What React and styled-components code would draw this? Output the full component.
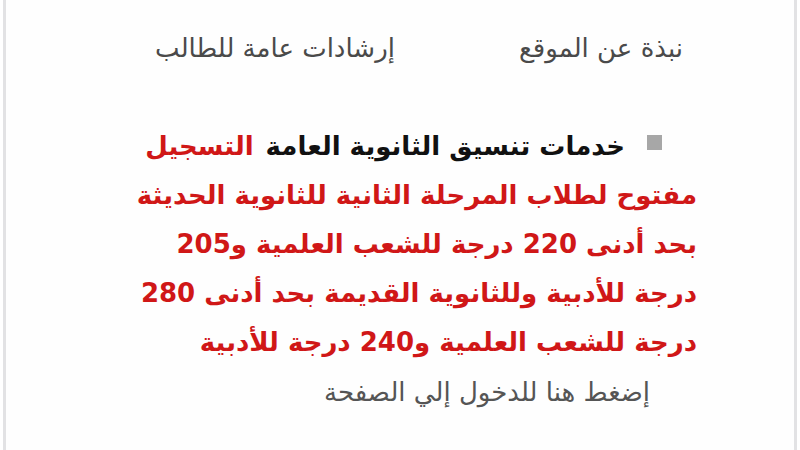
import React from 'react';
import styled, { createGlobalStyle } from 'styled-components';

const GlobalStyle = createGlobalStyle`
	html, body {
		margin: 0;
		padding: 0;
		background: #ffffff;
	}
	body {
		font-family: 'DejaVu Sans', 'Noto Sans', sans-serif;
	}
`;

const Frame = styled.div`
	width: 794px;
	height: 450px;
	margin-left: 3px;
	border-left: 3px solid #e2e2e4;
	border-right: 3px solid #e2e2e4;
	background: #fefefe;
	direction: rtl;
	box-sizing: border-box;
	overflow: hidden;
`;

const Nav = styled.nav`
	display: flex;
	gap: 124px;
	padding: 30px 111px 0 0;
	height: 70px;
	box-sizing: border-box;
`;

const NavItem = styled.a`
	font-size: 26px;
	color: #4a4a4a;
	text-decoration: none;
	line-height: 36px;
`;

const Content = styled.div`
	padding: 52px 97px 0 90px;
`;

const Lead = styled.p`
	margin: 0;
	font-size: 26px;
	font-weight: bold;
	line-height: 49px;
	color: #d01717;
`;

const Bullet = styled.span`
	display: inline-block;
	width: 15px;
	height: 15px;
	background: #a7a7a7;
	margin: 0 35px 0 22px;
	vertical-align: 5px;
`;

const Title = styled.span`
	color: #111111;
	margin-left: 12px;
`;

const Link = styled.a`
	display: block;
	margin: 8px 47px 0 0;
	font-size: 26px;
	color: #555555;
	text-decoration: none;
	line-height: 34px;
`;

export default function App() {
	return (
		<>
			<GlobalStyle />
			<Frame>
				<Nav>
					<NavItem href="#">نبذة عن الموقع</NavItem>
					<NavItem href="#">إرشادات عامة للطالب</NavItem>
				</Nav>
				<Content>
					<Lead>
						<Bullet />
						<Title>خدمات تنسيق الثانوية العامة</Title>
						التسجيل
						<br />
						مفتوح لطلاب المرحلة الثانية للثانوية الحديثة
						<br />
						بحد أدنى 220 درجة للشعب العلمية و205
						<br />
						درجة للأدبية وللثانوية القديمة بحد أدنى 280
						<br />
						درجة للشعب العلمية و240 درجة للأدبية
					</Lead>
					<Link href="#">إضغط هنا للدخول إلي الصفحة</Link>
				</Content>
			</Frame>
		</>
	);
}
